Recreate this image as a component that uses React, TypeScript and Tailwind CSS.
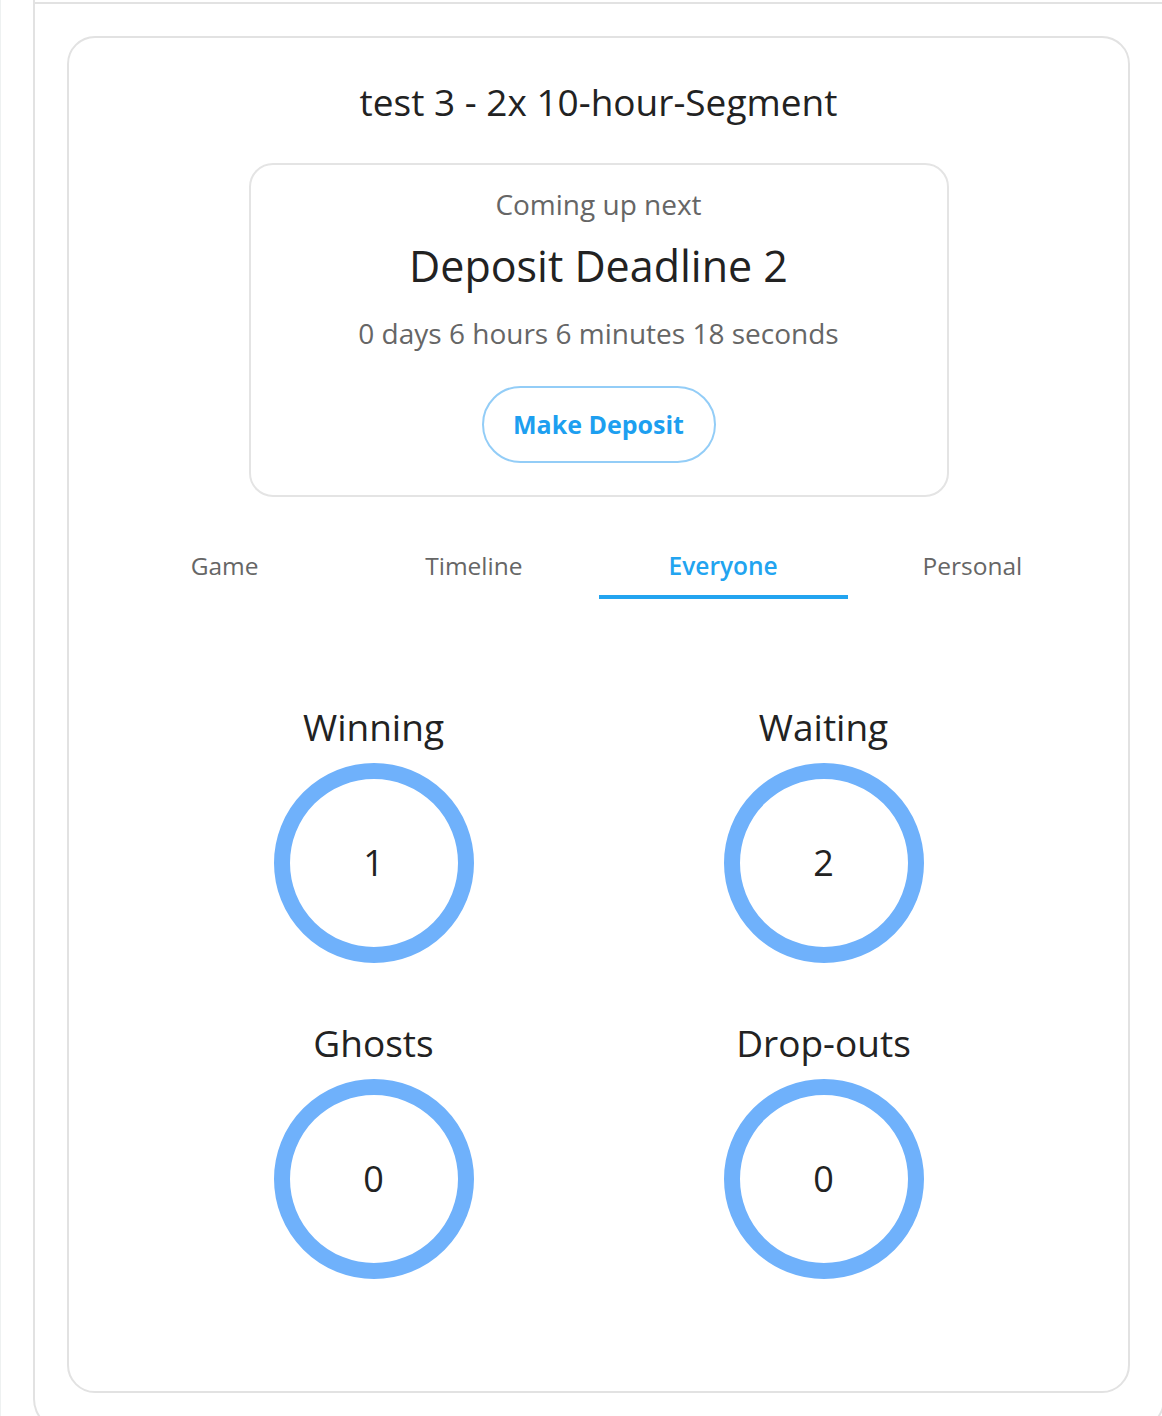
import React from "react";

const font = { fontFamily: '"Open Sans", "Noto Sans", sans-serif' };

function Stat({ label, value }: { label: string; value: string }) {
  return (
    <div className="flex flex-col items-center">
      <div className="text-[37px] leading-[48px] font-medium text-[#222]">{label}</div>
      <div className="mt-[12px] w-[200px] h-[200px] rounded-full border-[16px] border-[#6fb1fb] flex items-center justify-center">
        <span className="text-[36px] leading-none text-[#222]">{value}</span>
      </div>
    </div>
  );
}

export default function App() {
  const tabs = ["Game", "Timeline", "Everyone", "Personal"];
  return (
    <div className="relative h-[1416px] w-[1162px] overflow-hidden bg-white flex" style={font}>
      <div className="w-[1px] h-full bg-[#eef1f1] shrink-0" />
      <div className="ml-[32px] w-[1132px] shrink-0 border-x-2 border-b-2 border-[#e2e2e2] rounded-b-[32px] pb-[36px] self-start">
        <div className="mt-[2px] h-[2px] bg-[#e2e2e2]" />
        <div className="ml-[32px] mt-[32px] w-[1063px] border-2 border-[#e2e2e2] rounded-[28px] pt-[39px] pb-[112px] px-[31px]">
          <div className="text-center text-[37px] leading-[50px] font-medium text-[#222] whitespace-pre">
            test 3 - 2x 10-hour-Segment
          </div>
          <div className="mx-auto mt-[36px] w-[700px] border-2 border-[#e4e4e4] rounded-[24px] pt-[21px] pb-[32px] flex flex-col items-center">
            <div className="text-[28px] leading-[36px] font-normal text-[#666]">Coming up next</div>
            <div className="mt-[16px] text-[43px] leading-[56px] text-[#222]">Deposit Deadline 2</div>
            <div className="mt-[21px] text-[28px] leading-[36px] font-normal text-[#666]">
              0 days 6 hours 6 minutes 18 seconds
            </div>
            <div className="mt-[35px] w-[234px] h-[77px] rounded-full border-2 border-[#93cdf7] flex items-center justify-center">
              <span className="text-[25px] font-bold text-[#1d9ff0]">Make Deposit</span>
            </div>
          </div>
          <div className="mt-[54px] grid grid-cols-4">
            {tabs.map((t) => {
              const active = t === "Everyone";
              return (
                <div key={t} className="flex flex-col items-center">
                  <div
                    className={
                      active
                        ? "text-[24.5px] leading-[30px] font-semibold text-[#22a4f0]"
                        : "text-[24.5px] leading-[30px] font-medium text-[#666]"
                    }
                  >
                    {t}
                  </div>
                  <div className={active ? "mt-[14px] h-[4px] w-full bg-[#22a4f0]" : "mt-[14px] h-[4px] w-full"} />
                </div>
              );
            })}
          </div>
          <div className="mx-auto mt-[104px] w-[900px] grid grid-cols-2 gap-y-[56px]">
            <Stat label="Winning" value="1" />
            <Stat label="Waiting" value="2" />
            <Stat label="Ghosts" value="0" />
            <Stat label="Drop-outs" value="0" />
          </div>
        </div>
      </div>
    </div>
  );
}
